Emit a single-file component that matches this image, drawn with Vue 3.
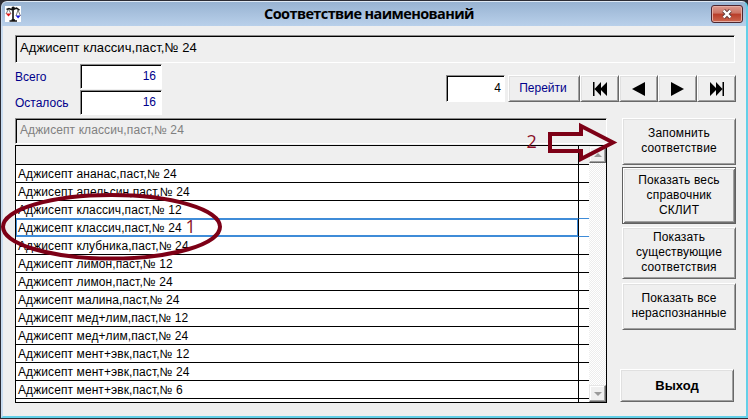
<script setup>
const rows = [
  'Аджисепт ананас,паст,№ 24',
  'Аджисепт апельсин,паст,№ 24',
  'Аджисепт классич,паст,№ 12',
  'Аджисепт классич,паст,№ 24',
  'Аджисепт клубника,паст,№ 24',
  'Аджисепт лимон,паст,№ 12',
  'Аджисепт лимон,паст,№ 24',
  'Аджисепт малина,паст,№ 24',
  'Аджисепт мед+лим,паст,№ 12',
  'Аджисепт мед+лим,паст,№ 24',
  'Аджисепт мент+эвк,паст,№ 12',
  'Аджисепт мент+эвк,паст,№ 24',
  'Аджисепт мент+эвк,паст,№ 6',
]
const selected = 3
const nav = [
  'M1 0h1.5v14H1zM9 0v14L2.5 7zM15 0v14L8 7z',
  'M14 0v14L1 7z',
  'M1 0v14L14 7z',
  'M13.5 0H15v14h-1.5zM1 0v14L8 7zM7 0v14L13.5 7z',
]
</script>

<template>
  <div class="window">
    <header class="title">
      <svg class="app-icon" width="16" height="16" viewBox="0 0 16 16">
        <rect width="16" height="16" fill="#fff" />
        <path d="M1.5 3.6L4 2.6l3 1.2M9 3l2.5-.8 3 2M8 2v12M4.5 15h7.5M6.5 14h3.5" fill="none" stroke="#111" stroke-width="1.6" />
        <circle cx="8.2" cy="2.4" r="1.8" fill="#111" />
        <path d="M3.5 3L1 8M3.5 3L6 8M13 4l-2 6M13 4l2.5 6" fill="none" stroke="#444" stroke-width=".7" />
        <path d="M.8 7.6h5.4L3.5 10.4z" fill="#e01818" />
        <path d="M10.6 9.6h5L13.1 12.4z" fill="#1414d8" />
      </svg>
      <h1>Соответствие наименований</h1>
      <button class="close">
        <svg width="12" height="10" viewBox="0 0 12 10">
          <path d="M2.6 1.5l6.8 7M9.4 1.5l-6.8 7" stroke="#5c3a3a" stroke-width="4" />
          <path d="M2.6 1.5l6.8 7M9.4 1.5l-6.8 7" stroke="#fff" stroke-width="2.5" />
        </svg>
      </button>
    </header>

    <main class="client">
      <div class="field name"><span>Аджисепт классич,паст,№ 24</span></div>

      <section class="tools">
        <div class="counts">
          <label>Всего</label>
          <div class="field num blue">16</div>
          <label>Осталось</label>
          <div class="field num blue">16</div>
        </div>
        <div class="goto">
          <div class="field num">4</div>
          <button class="btn go"><span>Перейти</span></button>
          <button v-for="(d, i) in nav" :key="i" class="btn nav">
            <svg width="16" height="14" viewBox="0 0 16 14"><path :d="d" /></svg>
          </button>
        </div>
      </section>

      <section class="body">
        <div class="left">
          <div class="field current"><span>Аджисепт классич,паст,№ 24</span></div>
          <div class="table">
            <div class="grid">
              <div class="row head"><div class="cell"></div><div class="mark"></div></div>
              <div v-for="(r, i) in rows" :key="i" class="row" :class="{ sel: i === selected, above: i === selected - 1 }">
                <div class="cell"><span>{{ r }}</span></div>
                <div class="mark"></div>
              </div>
              <div class="row rest"><div class="cell"></div><div class="mark"></div></div>
            </div>
            <div class="scroll">
              <div class="arrow-btn"><svg width="8" height="4" viewBox="0 0 8 4"><path d="M0 4h8L4 0z" /></svg></div>
              <div class="arrow-btn"><svg width="8" height="4" viewBox="0 0 8 4"><path d="M0 0h8L4 4z" /></svg></div>
            </div>
          </div>
        </div>

        <aside class="side">
          <button class="btn b1">Запомнить<br />соответствие</button>
          <button class="btn b2">Показать весь<br />справочник<br />СКЛИТ</button>
          <button class="btn b3">Показать<br />существующие<br />соответствия</button>
          <button class="btn b4">Показать все<br />нераспознанные</button>
          <button class="btn exit"><span>Выход</span></button>
        </aside>
      </section>
    </main>

    <svg class="notes" width="748" height="419" viewBox="0 0 748 419">
      <ellipse cx="111.5" cy="226.8" rx="108.5" ry="31.8" />
      <path d="M550 134H581V126L613 142.5L581 159V151H550Z" />
      <text x="185.5" y="233">1</text>
      <text x="526.5" y="148">2</text>
    </svg>
  </div>
</template>

<style>
body { margin: 0; overflow: hidden; background: #000; }
</style>

<style scoped>
* { box-sizing: border-box; }
.window {
  position: relative;
  display: flex;
  flex-direction: column;
  width: 748px;
  height: 419px;
  padding: 1px 0 1px 1px;
  background: #2c2c34;
  font-family: "Liberation Sans", Arial, sans-serif;
  font-size: 12px;
  color: #000;
}
.title {
  display: flex;
  flex: none;
  align-items: flex-start;
  height: 25px;
  padding: 5px 3px 0 4px;
  border-top: 1px solid #dfe9f4;
  border-left: 1px solid #c8d8ea;
  border-right: 2px solid #63cfe8;
  border-radius: 6px 6px 0 0;
  background: linear-gradient(#98b3d2, #b9d0ea);
}
.app-icon { flex: none; margin: -1px 0 0 -1px; }
h1 {
  flex: 1;
  margin: -3px 0 0;
  padding-left: 6px;
  text-align: center;
  font: bold 14.5px/20px "Open Sans", "Noto Sans", sans-serif;
  letter-spacing: -0.6px;
}
.close {
  display: flex;
  align-items: center;
  justify-content: center;
  width: 32px;
  height: 18px;
  margin-top: -2px;
  padding: 0;
  border: 1px solid #4c2630;
  border-radius: 3px;
  background: linear-gradient(#dc9a8e 0, #cc7464 45%, #b83c28 50%, #cc6850 100%);
  box-shadow: inset 0 0 0 1px #e6aea4;
}
.client {
  flex: 1;
  padding: 9px 10px 0 12px;
  border-left: 2px solid #c9dcf0;
  border-right: 2px solid #63cfe8;
  border-bottom: 2px solid #63cfe8;
  background: #efefef;
}
.field {
  display: flex;
  align-items: center;
  border: 1px solid;
  border-color: #8c8c8c #fff #fff #8c8c8c;
  box-shadow: inset 1px 1px #000;
  white-space: nowrap;
}
.name { width: 720px; height: 28px; padding: 0 0 3px 4px; font-size: 13px; letter-spacing: .08px; }
.tools { display: flex; justify-content: space-between; height: 55px; width: 721px; padding-top: 1px; }
.counts { display: grid; grid-template-columns: 65px 82px; grid-template-rows: 25px 25px; row-gap: 1px; color: #00008b; }
.counts label { padding-top: 6px; line-height: 15px; }
.num { justify-content: flex-end; padding: 0 5px 2px 0; background: #fff; }
.blue { color: #00008b; }
.goto { display: flex; height: 27px; margin-top: 11px; }
.goto .num { width: 59px; margin-right: 3px; padding-right: 3px; }
.btn {
  display: flex;
  flex: none;
  align-items: center;
  justify-content: center;
  padding: 0;
  border: 1px solid;
  border-color: #fff #686868 #686868 #fff;
  border-radius: 0;
  background: #efefef;
  box-shadow: inset 1px 1px #e0e0e0, inset -1px -1px #a0a0a0;
  color: #000;
  font: 12px/15px "Liberation Sans", Arial, sans-serif;
  text-align: center;
}
.go { width: 72px; padding-right: 2px; color: #00008b; }
.nav { width: 39px; }
.body { display: flex; gap: 13px; }
.left { width: 592px; }
.current { width: 592px; height: 26px; margin-bottom: 1px; padding: 0 0 2px 4px; color: #808080; letter-spacing: .1px; }
.table { display: flex; width: 592px; height: 258px; border: 1px solid #000; background: #fff; }
.grid { width: 573px; }
.row { display: flex; height: 18px; }
.cell, .mark { border-bottom: 1px solid #000; }
.cell { width: 563px; padding-left: 2px; border-right: 1px solid #000; line-height: 19px; letter-spacing: .09px; white-space: nowrap; }
.mark { flex: 1; }
.head { height: 19px; }
.head > div { background: #efefef; }
.above > div { border-bottom-color: #3f8cd8; }
.sel > div { border-bottom-color: #3f8cd8; }
.sel .cell { box-shadow: inset 0 0 0 1px #3f8cd8; }
.rest { height: 3px; }
.rest > div { border-bottom: 0; }
.scroll {
  display: flex;
  flex-direction: column;
  justify-content: space-between;
  width: 17px;
  background: repeating-conic-gradient(#fff 0 25%, #ededed 0 50%) 0 0 / 2px 2px;
}
.arrow-btn {
  display: flex;
  align-items: center;
  justify-content: center;
  height: 17px;
  border: 1px solid;
  border-color: #e6e6e6 #686868 #686868 #e6e6e6;
  background: #efefef;
  box-shadow: inset -1px -1px #a0a0a0, inset 1px 1px #fff;
}
.arrow-btn path { fill: #9a9a9a; }
.side { display: flex; flex-direction: column; width: 116px; padding-left: 2px; }
.side .btn { width: 114px; padding-bottom: 2px; letter-spacing: .15px; }
.b1 { height: 47px; }
.side .b2 {
  height: 57px;
  margin-top: 2px;
  padding-bottom: 0;
  border: 1px solid #606060;
  box-shadow: inset 1px 1px #fff, inset -1px -1px #707070, inset 2px 2px #e0e0e0, inset -2px -2px #a0a0a0;
}
.b3 { height: 52px; margin-top: 3px; }
.b4 { height: 47px; margin-top: 4px; }
.side .exit { height: 33px; margin: 39px 0 0 -2px; padding-bottom: 1px; font-size: 13px; font-weight: bold; letter-spacing: 0; }
.notes { position: absolute; left: 0; top: 0; fill: none; stroke: #7d0016; stroke-width: 4; pointer-events: none; }
.notes text { fill: #8a1028; stroke: none; font: 18px "Open Sans", sans-serif; }
</style>
